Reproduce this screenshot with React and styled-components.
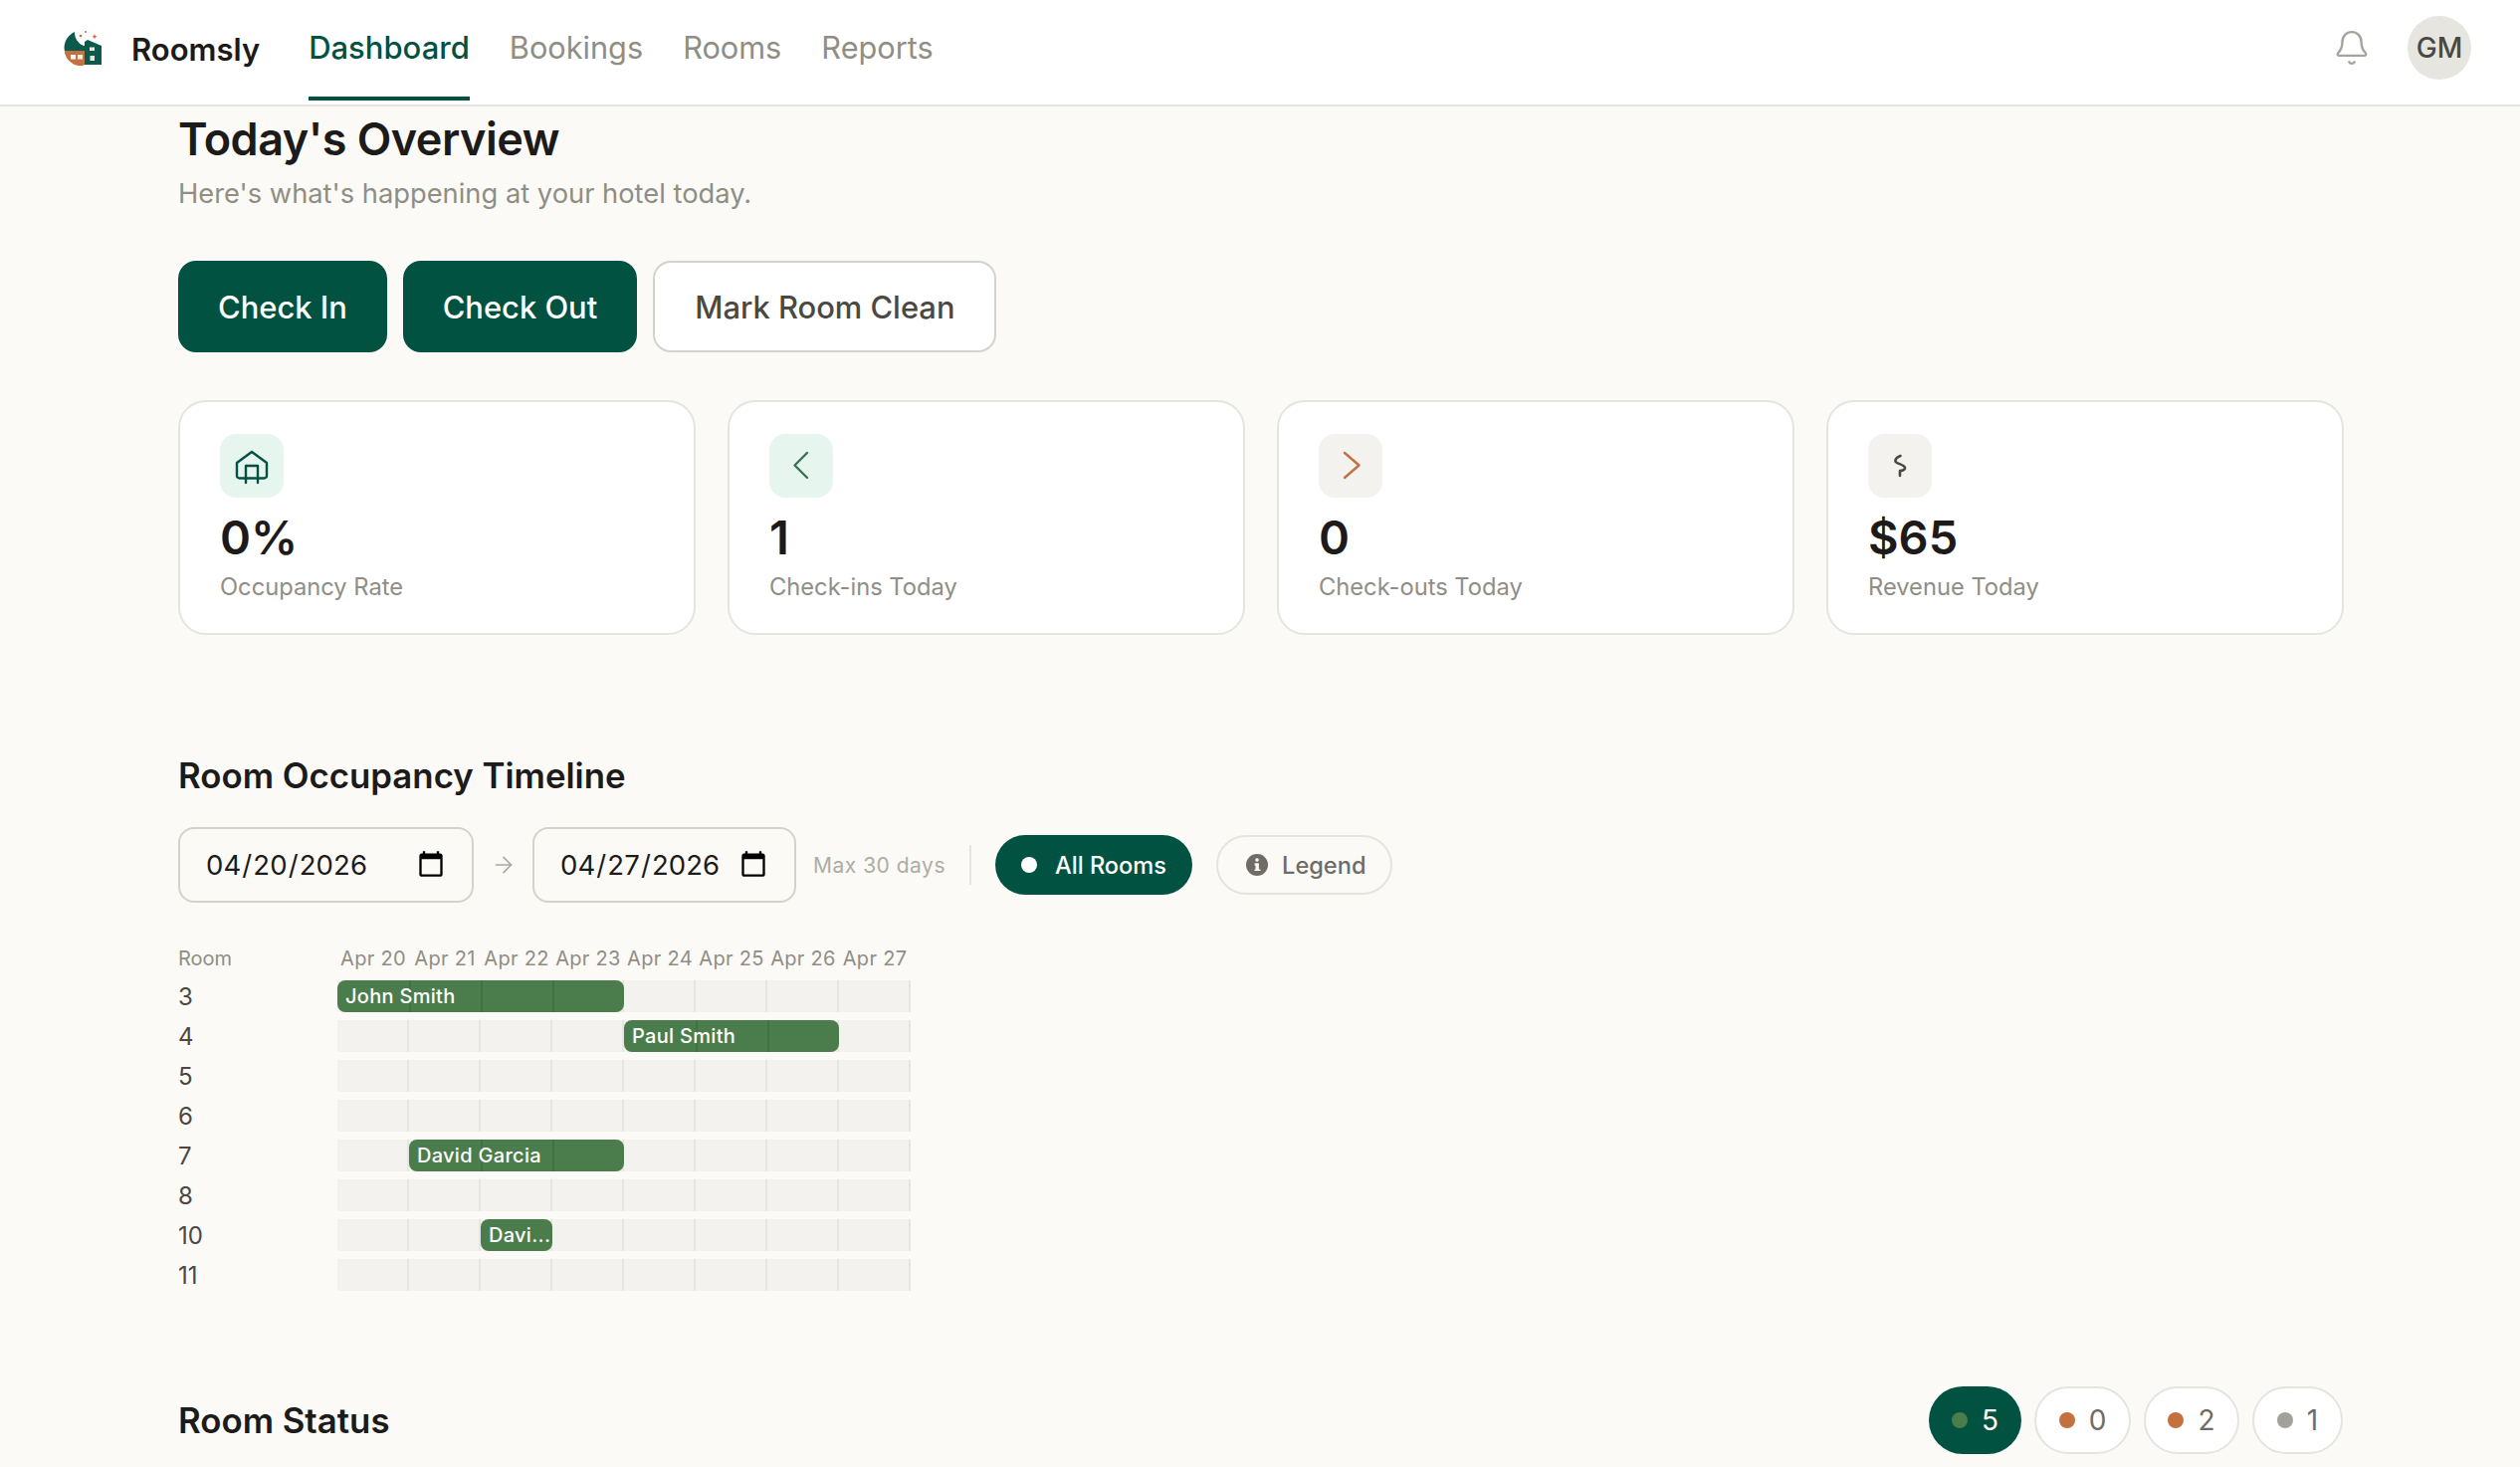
import React from 'react';
import styled, { createGlobalStyle } from 'styled-components';
import { Bell, ArrowRight } from 'lucide-react';

const GlobalStyle = createGlobalStyle`
  * { box-sizing: border-box; }
  html, body { margin: 0; padding: 0; background: #fbfaf7; }
  body { font-family: Inter, "Noto Sans", sans-serif; color: #1c1b19; overflow: hidden; }
`;

const Nav = styled.header`
  height: 107px;
  background: #fff;
  border-bottom: 2px solid #e6e4df;
  display: flex;
  align-items: center;
  padding: 0 49px 10px 63px;
  justify-content: space-between;
`;
const NavLeft = styled.div`
  display: flex;
  align-items: center;
`;
const Brand = styled.div`
  display: flex;
  align-items: center;
  gap: 29px;
  font-size: 31px;
  font-weight: 600;
  margin-right: 49px;
  padding-top: 3px;
`;
const Tabs = styled.nav`
  display: flex;
  gap: 40px;
`;
const Tab = styled.a`
  position: relative;
  font-size: ${p => (p.$active ? '31px' : '30.7px')};
  font-weight: ${p => (p.$active ? 500 : 400)};
  color: ${p => (p.$active ? '#025242' : '#8f8e85')};
  &::after {
    content: '';
    display: ${p => (p.$active ? 'block' : 'none')};
    position: absolute;
    left: 0;
    right: 0;
    bottom: -35px;
    height: 4px;
    background: #025242;
  }
`;
const NavRight = styled.div`
  display: flex;
  align-items: center;
  gap: 37px;
`;
const Avatar = styled.div`
  width: 64px;
  height: 64px;
  border-radius: 50%;
  background: #e6e5e0;
  color: #4a4843;
  font-size: 28px;
  font-weight: 500;
  display: flex;
  align-items: center;
  justify-content: center;
`;

const Main = styled.main`
  width: 2176px;
  margin-left: 179px;
  padding-top: 4px;
`;
const Title = styled.h1`
  margin: 0;
  font-size: 45px;
  line-height: 58px;
  font-weight: 600;
  letter-spacing: -0.5px;
`;
const Sub = styled.p`
  margin: 8px 0 0;
  font-size: 27.3px;
  line-height: 36px;
  color: #8f8e85;
`;
const Actions = styled.div`
  display: flex;
  gap: 16px;
  margin-top: 49px;
`;
const ActionButton = styled.button`
  height: 92px;
  padding: 0 40px;
  border-radius: 18px;
  font: 500 30.9px Inter, sans-serif;
  background: ${p => (p.$outline ? '#fff' : '#025242')};
  color: ${p => (p.$outline ? '#4a4843' : '#fff')};
  border: ${p => (p.$outline ? '2px solid #d5d2cc' : 'none')};
`;
const Stats = styled.section`
  display: grid;
  grid-template-columns: repeat(4, 1fr);
  gap: 32px;
  margin-top: 48px;
`;
const StatCard = styled.div`
  height: 236px;
  background: #fff;
  border: 2px solid #e6e4df;
  border-radius: 28px;
  padding: 32px 40px;
`;
const StatIcon = styled.div`
  width: 64px;
  height: 64px;
  border-radius: 16px;
  background: ${p => p.$bg};
  svg { display: block; }
`;
const StatValue = styled.div`
  font-size: 47px;
  line-height: 58px;
  font-weight: 600;
  margin-top: 11px;
`;
const StatLabel = styled.div`
  font-size: 23.7px;
  line-height: 32px;
  color: #8f8e85;
  margin-top: 5px;
`;

const SectionTitle = styled.h2`
  margin: 0;
  font-size: 34.8px;
  line-height: 44px;
  font-weight: 600;
`;
const TimelineSection = styled.section`
  margin-top: 119px;
`;
const Controls = styled.div`
  display: flex;
  align-items: center;
  margin-top: 30px;
`;
const DateInput = styled.input`
  width: ${p => p.$w}px;
  height: 76px;
  border: 2px solid #d5d2cc;
  border-radius: 16px;
  background: transparent;
  padding: 0 26px 0 25px;
  font: 400 27.5px Inter, sans-serif;
  letter-spacing: 0.1px;
  color: #1c1b19;
  &::-webkit-calendar-picker-indicator {
    width: 30px;
    height: 30px;
    margin: 0;
    padding: 0;
  }
  &::-webkit-datetime-edit { padding: 0; }
`;
const ArrowBox = styled.div`
  width: 59px;
  display: flex;
  justify-content: center;
  color: #a8a79f;
`;
const MaxDays = styled.span`
  margin-left: 17px;
  font-size: 21px;
  letter-spacing: 0.5px;
  color: #aeada5;
`;
const Divider = styled.span`
  width: 2px;
  height: 40px;
  background: #e6e4df;
  margin: 0 24px;
`;
const Pill = styled.button`
  height: 60px;
  display: flex;
  align-items: center;
  gap: ${p => (p.$active ? '18px' : '13px')};
  padding: ${p => (p.$active ? '0 26px' : '0 24px 0 27px')};
  border-radius: 30px;
  font: 500 23.6px Inter, sans-serif;
  background: ${p => (p.$active ? '#025242' : 'transparent')};
  color: ${p => (p.$active ? '#fff' : '#6f6c66')};
  border: ${p => (p.$active ? 'none' : '2px solid #e6e4df')};
  margin-right: 24px;
`;
const WhiteDot = styled.span`
  width: 16px;
  height: 16px;
  border-radius: 50%;
  background: #fff;
`;

const Timeline = styled.div`
  margin-top: 42px;
  display: flex;
  flex-direction: column;
  gap: 8px;
`;
const TimeRow = styled.div`
  display: flex;
  align-items: center;
  height: ${p => (p.$head ? '28px' : '32px')};
`;
const RoomCell = styled.div`
  width: 160px;
  flex: none;
  font-size: ${p => (p.$head ? '20px' : '24px')};
  color: ${p => (p.$head ? '#8f8e85' : '#4a4843')};
`;
const DayGrid = styled.div`
  display: grid;
  grid-template-columns: repeat(8, 72px);
  height: 100%;
`;
const DayLabel = styled.div`
  font-size: 20px;
  line-height: 28px;
  letter-spacing: 0.3px;
  text-align: center;
  white-space: nowrap;
  color: #8f8e85;
`;
const Track = styled(DayGrid)`
  background: repeating-linear-gradient(90deg, #f4f2ef 0 70px, #e8e6e1 70px 72px);
`;
const Bar = styled.div`
  grid-column: ${p => p.$start} / span ${p => p.$span};
  border-radius: 8px;
  padding: 0 8px;
  font-size: 20px;
  line-height: 32px;
  font-weight: 500;
  letter-spacing: 0.3px;
  color: #fff;
  white-space: nowrap;
  overflow: hidden;
  background:
    linear-gradient(#4a7d4b, #4a7d4b) 0 0 / 72px 100% no-repeat,
    linear-gradient(90deg, #417244 2px, transparent 2px) 0 0 / 72px 100%,
    #4a7d4b;
`;

const StatusHead = styled.section`
  display: flex;
  align-items: center;
  justify-content: space-between;
  margin-top: 96px;
  padding-right: 1px;
`;
const Filters = styled.div`
  display: flex;
  gap: 13px;
`;
const CountPill = styled.button`
  height: 68px;
  width: ${p => p.$w}px;
  display: flex;
  align-items: center;
  justify-content: center;
  gap: 14px;
  border-radius: 34px;
  font: 400 28px Inter, sans-serif;
  background: ${p => (p.$active ? '#025242' : '#fff')};
  color: ${p => (p.$active ? '#fff' : '#6f6c66')};
  border: ${p => (p.$active ? 'none' : '2px solid #e6e4df')};
`;
const Dot = styled.span`
  width: 16px;
  height: 16px;
  border-radius: 50%;
  background: ${p => p.$color};
`;

const Logo = () => (
  <svg width="40" height="36" viewBox="0 0 40 36">
    <path d="M12 1 A17 17 0 1 0 26 33 L26 15 L21 15 A14 14 0 0 1 12 1 Z" fill="#0c5a4c" />
    <path d="M2 20 L23 20 L23 33.500 A17 17 0 0 1 16 35 A17 17 0 0 1 2 22 Z" fill="#c4703f" />
    <rect x="8" y="24" width="5" height="4.500" fill="#fff" />
    <rect x="15" y="24" width="5" height="4.500" fill="#f3ece2" />
    <path d="M22 34 L22 11 L25 9 L39 15 L39 34 Z" fill="#0c5a4c" />
    <rect x="27" y="16.500" width="5" height="3.500" fill="#e9e6df" />
    <rect x="27.500" y="25" width="4.500" height="5" fill="#e9e6df" />
    <circle cx="18" cy="5" r="1.300" fill="#c4703f" />
    <circle cx="23" cy="1" r="1" fill="#c4703f" />
    <path d="M32 3 l0.800 1.900 1.900 0.800 -1.900 0.800 -0.800 1.900 -0.800 -1.900 -1.900 -0.800 1.900 -0.800 Z" fill="#c4703f" />
  </svg>
);

const HouseIcon = () => (
  <svg width="64" height="64" viewBox="0 0 64 64" fill="none" stroke="#025242" strokeWidth="2.4" strokeLinecap="round" strokeLinejoin="round">
    <path d="M17 29 L32 18 L47 29 V42 a2.5 2.5 0 0 1 -2.5 2.5 H19.500 a2.500 2.500 0 0 1 -2.500 -2.500 Z" />
    <path d="M26 49 V32 H38 V49" />
  </svg>
);
const ChevronIcon = ({ d, color }) => (
  <svg width="64" height="64" viewBox="0 0 64 64" fill="none" stroke={color} strokeWidth="2.400" strokeLinecap="round" strokeLinejoin="round">
    <path d={d} />
  </svg>
);
const DollarIcon = () => (
  <svg width="64" height="64" viewBox="0 0 64 64" fill="none" stroke="#4a4843" strokeWidth="2.600" strokeLinecap="round" strokeLinejoin="round">
    <path d="M32.500 22 C29 23.500 27 25.500 27.500 27.500 C28 30 36.500 30.500 37 34 C37.300 36.500 33 37 32 37 V42" />
  </svg>
);
const InfoIcon = () => (
  <svg width="24" height="24" viewBox="0 0 24 24">
    <circle cx="12" cy="12" r="11" fill="#6f6c66" />
    <rect x="10.500" y="10.500" width="3.400" height="7.500" rx="0.500" fill="#fbfaf7" />
    <path d="M9.500 10.500 h4 v2 h-4 Z M9.500 16.500 h6 v1.500 h-6 Z" fill="#fbfaf7" />
    <circle cx="12" cy="7" r="1.800" fill="#fbfaf7" />
  </svg>
);

const stats = [
  { value: '0%', label: 'Occupancy Rate', bg: '#e6f5ed', icon: <HouseIcon /> },
  { value: '1', label: 'Check-ins Today', bg: '#e6f5ed', icon: <ChevronIcon d="M38 19 L25.500 31.500 L38 44" color="#3e6f58" /> },
  { value: '0', label: 'Check-outs Today', bg: '#f3f2ee', icon: <ChevronIcon d="M26 19 L40.500 31.500 L26 44" color="#c4703f" /> },
  { value: '$65', label: 'Revenue Today', bg: '#f3f2ee', icon: <DollarIcon /> },
];

const days = ['Apr 20', 'Apr 21', 'Apr 22', 'Apr 23', 'Apr 24', 'Apr 25', 'Apr 26', 'Apr 27'];

const rooms = [
  { room: '3', bar: { start: 1, span: 4, name: 'John Smith' } },
  { room: '4', bar: { start: 5, span: 3, name: 'Paul Smith' } },
  { room: '5' },
  { room: '6' },
  { room: '7', bar: { start: 2, span: 3, name: 'David Garcia' } },
  { room: '8' },
  { room: '10', bar: { start: 3, span: 1, name: 'Davi...' } },
  { room: '11' },
];

const counts = [
  { n: 5, color: '#4a7d4b', w: 93, active: true },
  { n: 0, color: '#c4703f', w: 97 },
  { n: 2, color: '#c4703f', w: 96 },
  { n: 1, color: '#a3a29a', w: 91 },
];

export default function App() {
  return (
    <>
      <GlobalStyle />
      <Nav>
        <NavLeft>
          <Brand>
            <Logo />
            Roomsly
          </Brand>
          <Tabs>
            <Tab $active>Dashboard</Tab>
            <Tab>Bookings</Tab>
            <Tab>Rooms</Tab>
            <Tab>Reports</Tab>
          </Tabs>
        </NavLeft>
        <NavRight>
          <Bell size={38} color="#a5a49c" strokeWidth={1.5} />
          <Avatar>GM</Avatar>
        </NavRight>
      </Nav>
      <Main>
        <Title>Today's Overview</Title>
        <Sub>Here's what's happening at your hotel today.</Sub>
        <Actions>
          <ActionButton>Check In</ActionButton>
          <ActionButton>Check Out</ActionButton>
          <ActionButton $outline>Mark Room Clean</ActionButton>
        </Actions>
        <Stats>
          {stats.map(s => (
            <StatCard key={s.label}>
              <StatIcon $bg={s.bg}>{s.icon}</StatIcon>
              <StatValue>{s.value}</StatValue>
              <StatLabel>{s.label}</StatLabel>
            </StatCard>
          ))}
        </Stats>
        <TimelineSection>
          <SectionTitle>Room Occupancy Timeline</SectionTitle>
          <Controls>
            <DateInput type="date" $w={297} defaultValue="2026-04-20" />
            <ArrowBox><ArrowRight size={26} strokeWidth={1.5} /></ArrowBox>
            <DateInput type="date" $w={265} defaultValue="2026-04-27" />
            <MaxDays>Max 30 days</MaxDays>
            <Divider />
            <Pill $active><WhiteDot />All Rooms</Pill>
            <Pill><InfoIcon />Legend</Pill>
          </Controls>
          <Timeline>
            <TimeRow $head>
              <RoomCell $head>Room</RoomCell>
              <DayGrid>
                {days.map(d => <DayLabel key={d}>{d}</DayLabel>)}
              </DayGrid>
            </TimeRow>
            {rooms.map(r => (
              <TimeRow key={r.room}>
                <RoomCell>{r.room}</RoomCell>
                <Track>
                  {r.bar && <Bar $start={r.bar.start} $span={r.bar.span}>{r.bar.name}</Bar>}
                </Track>
              </TimeRow>
            ))}
          </Timeline>
        </TimelineSection>
        <StatusHead>
          <SectionTitle>Room Status</SectionTitle>
          <Filters>
            {counts.map((c, i) => (
              <CountPill key={i} $active={c.active} $w={c.w}>
                <Dot $color={c.color} />
                {c.n}
              </CountPill>
            ))}
          </Filters>
        </StatusHead>
      </Main>
    </>
  );
}
